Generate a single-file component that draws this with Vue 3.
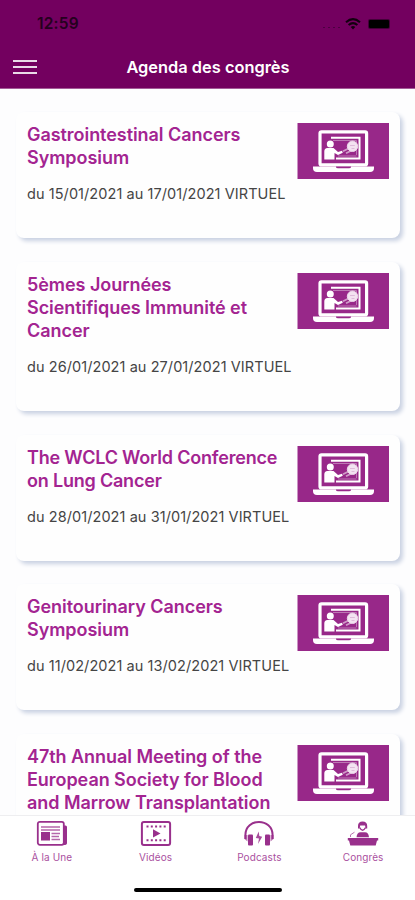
<script setup>
const events = [
  { lines: ['Gastrointestinal Cancers', 'Symposium'], date: 'du 15/01/2021 au 17/01/2021 VIRTUEL' },
  { lines: ['5èmes Journées', 'Scientifiques Immunité et', 'Cancer'], date: 'du 26/01/2021 au 27/01/2021 VIRTUEL' },
  { lines: ['The WCLC World Conference', 'on Lung Cancer'], date: 'du 28/01/2021 au 31/01/2021 VIRTUEL', tight: true },
  { lines: ['Genitourinary Cancers', 'Symposium'], date: 'du 11/02/2021 au 13/02/2021 VIRTUEL' },
  { lines: ['47th Annual Meeting of the', 'European Society for Blood', 'and Marrow Transplantation'], date: '' },
]
</script>

<template>
  <div class="screen">
    <header class="header">
      <div class="status">
        <span class="time">12:59</span>
        <div class="indicators">
          <span class="dots"><i v-for="n in 4" :key="n"></i></span>
          <svg class="wifi" width="16" height="12" viewBox="0 0 16 12" fill="none" stroke="#12000f">
            <path d="M1 4.2Q8-1.8 15 4.2" stroke-width="2.1" />
            <path d="M3.6 7Q8 3.2 12.4 7" stroke-width="2" />
            <path d="M5.7 8.9Q8 7.2 10.3 8.9L8 11.6Z" fill="#12000f" stroke="none" />
          </svg>
          <span class="battery"></span>
        </div>
      </div>
      <div class="bar">
        <button class="menu" aria-label="Menu"><i></i><i></i><i></i></button>
        <h1>Agenda des congrès</h1>
      </div>
    </header>

    <main class="list">
      <article v-for="event in events" :key="event.lines[0]" class="card">
        <div class="info">
          <h2 :class="{ tight: event.tight }"><span v-for="line in event.lines" :key="line">{{ line }}</span></h2>
          <p v-if="event.date">{{ event.date }}</p>
        </div>
        <svg class="thumb" width="92" height="56" viewBox="0 0 92 56">
          <rect x=".5" width="91.5" height="56" fill="#982889" />
          <rect x="23" y="8.9" width="46.6" height="33" rx="1.5" fill="none" stroke="#fff" stroke-width="3.2" />
          <path d="M34 14.8H62.5V35.5H39" fill="none" stroke="#fff" stroke-width="2" />
          <path d="M36 17.5H59.5M59.5 17.5V32M41 33H59.5" fill="none" stroke="#bd78b4" stroke-width="1" />
          <circle cx="33.3" cy="21" r="3.5" fill="#fff" />
          <path d="M27.3 36.5V28.5Q27.3 25 30.5 25H36.5L41 29L45 27.8L45.8 29.8L41 32L37.5 30V36.5Z" fill="#fff" />
          <path d="M46 28.3L51 25.8M49 30.3L54 27.8" stroke="#cf9bc8" stroke-width="1.8" />
          <circle cx="55.5" cy="23.3" r="5.2" fill="#f3e3f1" stroke="#ecd6e9" />
          <path d="M53 22.5H57.8M54.5 25.5H57.5" stroke="#dfbbda" stroke-width="1" />
          <path d="M16 43.5H77V45Q77 49 73 49H20Q16 49 16 45Z" fill="#fff" />
          <path d="M39 43.5H54V44Q54 45.3 52 45.3H41Q39 45.3 39 44Z" fill="#982889" />
        </svg>
      </article>
    </main>

    <footer class="tabs">
      <nav>
        <a class="tab">
          <svg width="32" height="27" viewBox="0 0 32 27">
            <rect x="1.8" y="1.8" width="26" height="23" rx="2" fill="none" stroke="#99308c" stroke-width="1.8" />
            <path d="M28 5.5H29.5Q31 5.5 31 7V23Q31 25 28 25Z" fill="#99308c" />
            <path d="M5 7H24M5 10H24M15.5 13.5H24M15.5 16.5H23M15.5 19.5H24" stroke="#b565ab" stroke-width="1.3" />
            <rect x="5" y="12" width="9" height="8.5" fill="#99308c" />
          </svg>
          <span>À la Une</span>
        </a>
        <a class="tab">
          <svg width="32" height="27" viewBox="0 0 32 27">
            <rect x="1.9" y="1.9" width="28.2" height="23" rx="2" fill="none" stroke="#99308c" stroke-width="2" />
            <path d="M6.5 6.5H26M6.5 20.3H26" stroke="#99308c" stroke-width="2" stroke-dasharray="2 2.3" />
            <path d="M13 9.3L20.5 13.4L13 17.5Z" fill="#99308c" />
          </svg>
          <span>Vidéos</span>
        </a>
        <a class="tab">
          <svg width="32" height="27" viewBox="0 0 32 27">
            <path d="M2.4 19V15C2.4-2.5 29.6-2.5 29.6 15V19" fill="none" stroke="#99308c" stroke-width="2" />
            <rect x="5" y="14.5" width="5" height="11" rx="1" fill="#99308c" />
            <rect x="22" y="14.5" width="5" height="11" rx="1" fill="#99308c" />
            <path d="M1.5 15V19L4.5 21.5V15ZM30.5 15V19L27.5 21.5V15Z" fill="#99308c" opacity=".65" />
            <path d="M15.7 11.5L12.8 18L16 18.5L15 24L19.2 16.8L16.3 16Z" fill="#a74c9b" />
          </svg>
          <span>Podcasts</span>
        </a>
        <a class="tab">
          <svg width="32" height="27" viewBox="0 0 32 27" fill="#99308c">
            <path d="M11 8.5V6Q11 1.5 15.6 1.5T20.2 6V8.5H18.7L18 5.5H13.2L12.5 8.5Z" />
            <path d="M12.6 7.5Q15.6 13 18.6 7.5" fill="none" stroke="#99308c" stroke-width="1.4" />
            <path d="M9.5 17.3Q10 12.2 13.5 12.2H18Q21.5 12.2 22 17.3Z" />
            <path d="M3.5 17V14.8L7.5 12.2" fill="none" stroke="#b875af" stroke-width="1" />
            <path d="M.8 18H31.2V20.5H30L28.7 25.5H3.3L2 20.5H.8Z" />
          </svg>
          <span>Congrès</span>
        </a>
      </nav>
      <div class="home"></div>
    </footer>
  </div>
</template>

<style>
body { margin: 0; overflow: hidden; }
</style>

<style scoped>
.screen {
  width: 415px;
  height: 900px;
  display: flex;
  flex-direction: column;
  overflow: hidden;
  background: #fdfdfe;
  font-family: Inter, "Liberation Sans", sans-serif;
}
.header {
  flex: none;
  height: 89px;
  box-sizing: border-box;
  background: #73005f;
  border-bottom: 1px solid #a45b98;
}
.status {
  height: 47px;
  display: flex;
  justify-content: space-between;
  align-items: center;
  padding: 0 25px 0 37px;
}
.time { color: #25001e; font-size: 15.5px; font-weight: 600; line-height: 20px; letter-spacing: .2px; }
.indicators { display: flex; align-items: center; }
.dots { display: flex; gap: 3px; margin: 7px 5px 0 0; }
.dots i { width: 2px; height: 1px; background: #4c0040; }
.battery { width: 20px; height: 8px; border-radius: 1px; background: #000; margin: 0 1px 0 8px; box-shadow: 0 0 0 1px #430038; }
.bar { height: 40px; display: grid; grid-template-columns: 50px 1fr 49px; align-items: center; }
.menu { margin: 0 0 0 13px; padding: 0; border: 0; background: none; width: 24px; display: grid; gap: 4px; }
.menu i { height: 2px; background: #eadbe8; }
h1 { margin: 0; text-align: center; color: #fff; font-size: 16.4px; font-weight: 600; line-height: 22px; white-space: nowrap; }
.list {
  flex: 1;
  min-height: 0;
  overflow: hidden;
  display: flex;
  flex-direction: column;
  gap: 23.7px;
  padding: 23.3px 15px 0 16px;
}
.card {
  flex: none;
  display: flex;
  justify-content: space-between;
  align-items: flex-start;
  box-sizing: border-box;
  padding: 11px 11px 33.5px;
  background: #fefefe;
  border-radius: 8px;
  box-shadow: 3px 3px 4px #c9d1e2;
}
h2 { margin: 0; color: #a32491; font-size: 18px; font-weight: 600; line-height: 23px; letter-spacing: -.05px; white-space: nowrap; }
h2.tight { letter-spacing: -.2px; }
h2 span { display: block; }
p { margin: 15px 0 .5px; color: #454545; font-size: 14.5px; line-height: 20px; letter-spacing: .07px; white-space: nowrap; }
.info { width: 0; }
.thumb { flex: none; }
.tabs {
  flex: none;
  height: 85px;
  box-sizing: border-box;
  border-top: 1px solid #eeeef0;
  background: #fff;
}
nav { display: grid; grid-template-columns: repeat(4, 1fr); height: 72px; }
.tab { display: flex; flex-direction: column; align-items: center; padding-top: 4px; }
.tab svg { flex: none; }
.tab span { color: #aa50a0; font-size: 10px; line-height: 14px; margin-top: 3px; letter-spacing: .1px; }
.home { width: 148px; height: 4px; border-radius: 2px; background: #000; margin: 0 auto; }
</style>
